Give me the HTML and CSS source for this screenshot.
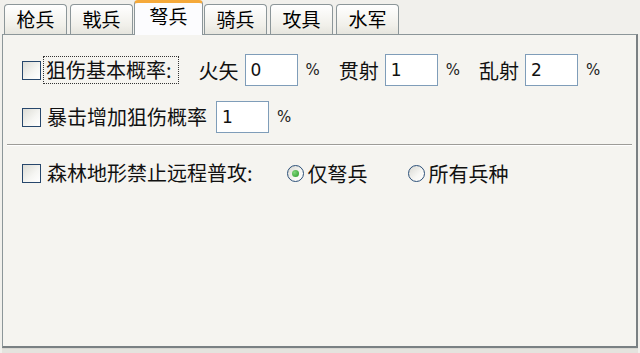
FILE: index.html
```html
<!DOCTYPE html>
<html lang="zh-CN">
<head>
    <meta charset="UTF-8">
    <title>弩兵设置</title>
    <link rel="stylesheet" href="styles.css">
</head>
<body>
    <div class="window">
        <div class="tabs">
            <div class="tab">枪兵</div>
            <div class="tab">戟兵</div>
            <div class="tab active">弩兵</div>
            <div class="tab">骑兵</div>
            <div class="tab">攻具</div>
            <div class="tab">水军</div>
        </div>
        <div class="panel">
            <div class="row">
                <span class="check"></span>
                <span class="label focus">狙伤基本概率:</span>
                <span class="field first">火矢</span>
                <span class="input">0</span>
                <span class="pct">%</span>
                <span class="field">贯射</span>
                <span class="input">1</span>
                <span class="pct">%</span>
                <span class="field">乱射</span>
                <span class="input">2</span>
                <span class="pct">%</span>
            </div>
            <div class="row second">
                <span class="check"></span>
                <span class="label">暴击增加狙伤概率</span>
                <span class="input near">1</span>
                <span class="pct">%</span>
            </div>
            <div class="sep"></div>
            <div class="row third">
                <span class="check"></span>
                <span class="label">森林地形禁止远程普攻:</span>
                <span class="radio checked"></span>
                <span class="rlabel">仅弩兵</span>
                <span class="radio far"></span>
                <span class="rlabel">所有兵种</span>
            </div>
        </div>
        <div class="bottom"></div>
    </div>
</body>
</html>
```

FILE: styles.css
```css
* {
    margin: 0;
    padding: 0;
    box-sizing: border-box;
}
body {
    background: #f1f0ec;
    font-family: "Noto Sans CJK SC", "Noto Sans", sans-serif;
    color: #111;
}
.window {
    width: 640px;
    height: 353px;
    padding-left: 2px;
    padding-right: 2px;
}
.tabs {
    display: flex;
    align-items: flex-end;
    height: 34px;
    padding-left: 2px;
}
.tab {
    width: 63px;
    height: 30px;
    margin-right: 3px;
    border: 1px solid #8c9699;
    border-bottom: none;
    border-radius: 4px 4px 0 0;
    background: linear-gradient(#ffffff, #f1f0ea 70%, #e6e5de);
    font-size: 19px;
    line-height: 28px;
    text-align: center;
    color: #000;
}
.tab.active {
    width: 69px;
    height: 35px;
    margin-left: -2px;
    margin-right: 1px;
    margin-bottom: -1px;
    border-top: 3px solid #f5a93a;
    background: #fcfcfe;
    line-height: 26px;
    position: relative;
    z-index: 1;
}
.panel {
    height: 314px;
    border: 1px solid #8c9699;
    border-right: 2px solid #7a8083;
    border-bottom: 2px solid #7a8083;
    background: #f5f4f0;
    padding: 19px 4px 0 4px;
}
.row {
    display: flex;
    align-items: center;
    height: 32px;
    padding-left: 15px;
    font-size: 20px;
}
.row.second {
    margin-top: 15px;
}
.row.third {
    margin-top: 14px;
    height: 26px;
}
.check {
    width: 19px;
    height: 19px;
    border: 1px solid #27476c;
    background: linear-gradient(135deg, #dcdcd6, #f6f6f3 60%, #ffffff);
    flex-shrink: 0;
}
.label {
    margin-left: 5px;
    line-height: 24px;
    padding: 0 1px;
}
.focus {
    margin-left: 4px;
    padding-right: 5px;
    outline: 1px dotted #333;
    outline-offset: 1px;
}
.field {
    margin-left: 19px;
}
.field.first {
    margin-left: 22px;
}
.input {
    width: 53px;
    height: 32px;
    margin-left: 6px;
    border: 1px solid #7f9db9;
    background: #fff;
    font-family: "DejaVu Sans", sans-serif;
    font-size: 17px;
    line-height: 30px;
    padding-left: 5px;
}
.input.near {
    margin-left: 8px;
}
.pct {
    margin-left: 8px;
    font-family: "DejaVu Sans", sans-serif;
    font-size: 15px;
    color: #222;
}
.sep {
    height: 2px;
    margin-top: 11px;
    border-top: 1px solid #9d9c98;
    border-bottom: 1px solid #ffffff;
}
.radio {
    width: 17px;
    height: 17px;
    margin-left: 33px;
    border: 1px solid #2b4f78;
    border-radius: 50%;
    background: linear-gradient(135deg, #d8d8d2, #f7f7f4 60%, #fff);
    display: flex;
    align-items: center;
    justify-content: center;
    flex-shrink: 0;
}
.radio.checked::after {
    content: "";
    width: 7px;
    height: 7px;
    border-radius: 50%;
    background: radial-gradient(circle at 35% 35%, #7ed67a, #2a9a2a);
}
.radio.far {
    margin-left: 40px;
}
.rlabel {
    margin-left: 4px;
}
.bottom {
    height: 5px;
    border-top: 1px solid #d8d7d2;
    background: #e4e3de;
}
```
